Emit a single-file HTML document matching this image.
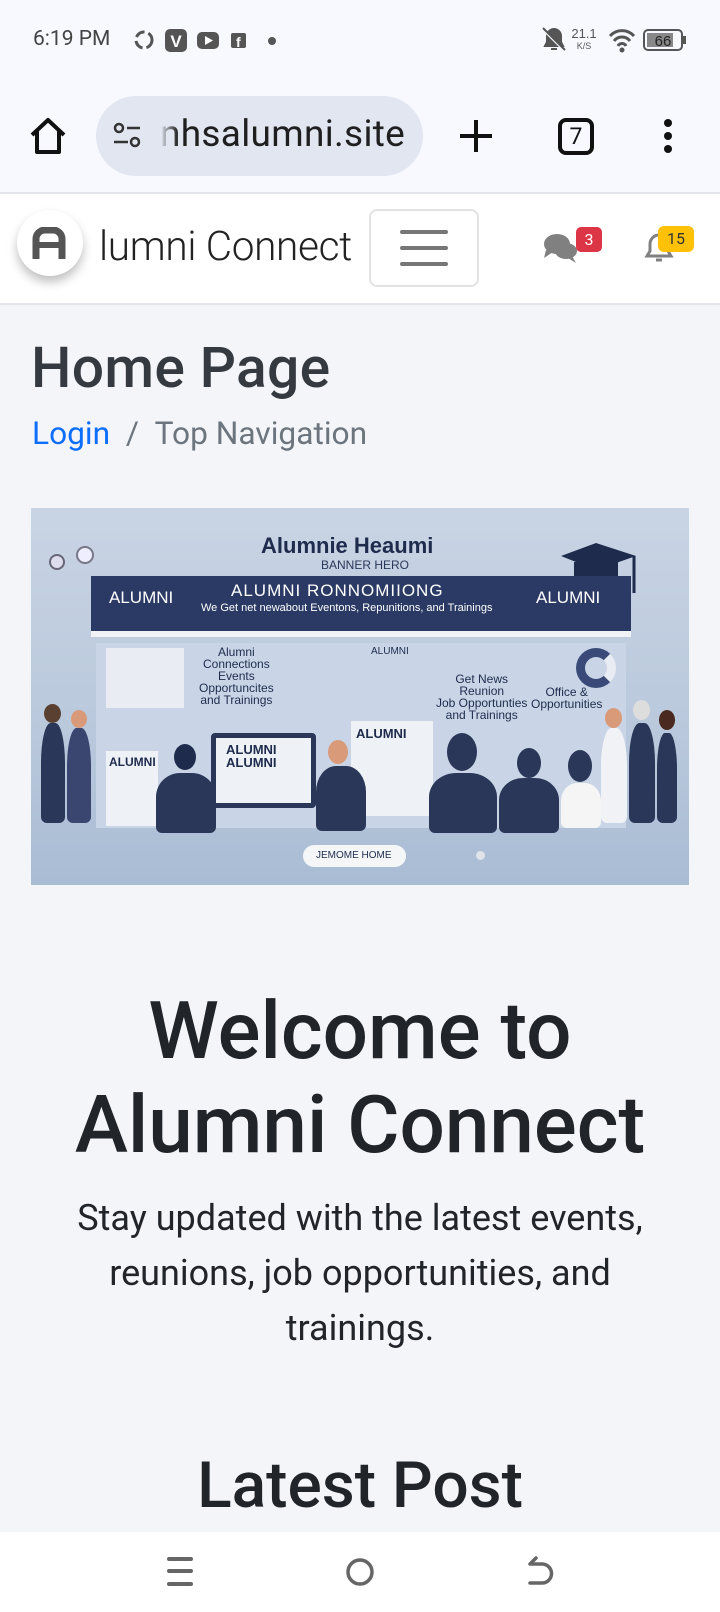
<!DOCTYPE html>
<html><head><meta charset="utf-8"><style>
*{margin:0;padding:0;box-sizing:border-box}
body{width:720px;height:1612px;overflow:hidden;background:#f4f5f9;font-family:"Roboto","Liberation Sans",sans-serif;position:relative}
.abs{position:absolute}
.sb{left:0;top:0;width:720px;height:192px;background:#f8f9fe}
.nav{left:0;top:192px;width:720px;height:113px;background:#fff;border-top:2px solid #e2e4ea;border-bottom:2px solid #e2e4ea}
.ban{left:31px;top:508px;width:658px;height:377px;background:linear-gradient(180deg,#c9d4e4 0%,#b9c8dc 60%,#a9bcd4 100%);overflow:hidden}
.ban .t{position:absolute;font-family:"Liberation Sans",sans-serif;white-space:nowrap}
.fig{position:absolute;background:#2a3758;border-radius:40% 40% 6px 6px}
.head{position:absolute;border-radius:50%}
</style></head><body>
<div class="abs sb"></div>
<div class="abs" style="left:33px;top:27px;font-size:21px;color:#444">6:19 PM</div>
<svg class="abs" style="left:132px;top:28px" width="150" height="26" viewBox="0 0 150 26">
<circle cx="12" cy="12" r="8" fill="none" stroke="#555" stroke-width="3" stroke-dasharray="10 4"/>
<rect x="33" y="1" width="22" height="23" rx="5" fill="#555"/><text x="44" y="19" font-size="17" font-weight="bold" fill="#fff" text-anchor="middle" font-family="Liberation Sans">V</text>
<rect x="65" y="4" width="22" height="17" rx="5" fill="#555"/><path d="M73 8 L81 12.5 L73 17Z" fill="#fff"/>
<rect x="99" y="5" width="15" height="15" rx="2" fill="#555"/><text x="104" y="19" font-size="14" font-weight="bold" fill="#fff" font-family="Liberation Sans">f</text>
<circle cx="140" cy="13" r="4" fill="#555"/></svg>
<svg class="abs" style="left:540px;top:24px" width="150" height="32" viewBox="0 0 150 32">
<path d="M5 22 L7 18 V12 A7 7 0 0 1 21 12 V18 L23 22 Z M11 25 h6" fill="#555" stroke="#555" stroke-width="2"/><path d="M3 5 L25 27" stroke="#f8f9fe" stroke-width="3"/><path d="M3 4 L25 26" stroke="#555" stroke-width="2"/>
<text x="44" y="14" font-size="13" fill="#555" text-anchor="middle" font-family="Liberation Sans">21.1</text><text x="44" y="25" font-size="9" fill="#555" text-anchor="middle" font-family="Liberation Sans">K/S</text>
<path d="M70 12 A16 16 0 0 1 94 12 M74 17 A10 10 0 0 1 90 17 M78 22 A4.5 4.5 0 0 1 86 22" stroke="#555" stroke-width="3" fill="none"/><circle cx="82" cy="26" r="2.5" fill="#555"/>
<rect x="104" y="6" width="38" height="20" rx="4" fill="none" stroke="#555" stroke-width="2"/><rect x="107" y="9" width="26" height="14" fill="#888"/><rect x="143" y="12" width="3" height="8" fill="#555"/>
<text x="123" y="22" font-size="15" fill="#222" text-anchor="middle" font-family="Liberation Sans">66</text></svg>
<svg class="abs" style="left:28px;top:116px" width="40" height="40" viewBox="0 0 40 40"><path d="M4 19 L20 4 L36 19 M9 15 V36 H31 V15" fill="none" stroke="#111" stroke-width="4" stroke-linejoin="round"/></svg>
<div class="abs" style="left:96px;top:96px;width:327px;height:80px;border-radius:40px;background:#e1e6f0"></div>
<svg class="abs" style="left:112px;top:122px" width="32" height="28" viewBox="0 0 32 28"><circle cx="7" cy="6" r="4" fill="none" stroke="#333" stroke-width="2.5"/><path d="M15 6 H28 M2 20 H16" stroke="#333" stroke-width="2.5"/><circle cx="23" cy="20" r="4" fill="none" stroke="#333" stroke-width="2.5"/></svg>
<div class="abs" style="left:160px;top:113px;font-size:37px;color:#1f1f1f;letter-spacing:0.3px">nhsalumni.site</div>
<div class="abs" style="left:160px;top:110px;width:18px;height:50px;background:linear-gradient(90deg,#e1e6f0,rgba(225,230,240,0))"></div>
<svg class="abs" style="left:458px;top:118px" width="36" height="36"><path d="M18 2 V34 M2 18 H34" stroke="#111" stroke-width="4"/></svg>
<div class="abs" style="left:558px;top:118px;width:36px;height:37px;border:4px solid #111;border-radius:8px;font-size:23px;text-align:center;line-height:29px;color:#111">7</div>
<svg class="abs" style="left:662px;top:118px" width="12" height="36"><circle cx="6" cy="5" r="4" fill="#111"/><circle cx="6" cy="18" r="4" fill="#111"/><circle cx="6" cy="31" r="4" fill="#111"/></svg>
<div class="abs nav"></div>
<div class="abs" style="left:17px;top:210px;width:66px;height:66px;border-radius:50%;background:#fff;box-shadow:0 6px 10px rgba(0,0,0,.25)"></div>
<svg class="abs" style="left:32px;top:227px" width="34" height="32" viewBox="0 0 34 32"><path d="M4 32 V12 A9 9 0 0 1 13 3 H21 A9 9 0 0 1 30 12 V32" fill="none" stroke="#555" stroke-width="7"/><path d="M4 18 H30" stroke="#555" stroke-width="6"/></svg>
<div class="abs" style="left:99px;top:222px;font-size:40.5px;color:#222;font-weight:300;letter-spacing:-0.3px">lumni Connect</div>
<div class="abs" style="left:369px;top:209px;width:110px;height:78px;border:2px solid #e3e3e3;border-radius:8px"></div>
<svg class="abs" style="left:399px;top:228px" width="50" height="40"><path d="M3 4 H47 M3 20 H47 M3 36 H47" stroke="#777" stroke-width="4" stroke-linecap="round"/></svg>
<svg class="abs" style="left:542px;top:232px" width="40" height="32" viewBox="0 0 40 32"><ellipse cx="15" cy="12" rx="13" ry="10" fill="#808080"/><path d="M4 18 L2 26 L11 20Z" fill="#808080"/><ellipse cx="24" cy="19" rx="11" ry="8" fill="#808080"/><path d="M30 24 L34 31 L26 26Z" fill="#808080"/></svg>
<div class="abs" style="left:576px;top:227px;width:26px;height:25px;background:#dc3545;border-radius:5px;color:#fff;font-size:16px;text-align:center;line-height:25px">3</div>
<svg class="abs" style="left:642px;top:230px" width="34" height="34" viewBox="0 0 34 34"><path d="M5 26 L8 21 V14 A9 9 0 0 1 26 14 V21 L29 26 Z" fill="none" stroke="#808080" stroke-width="3"/><path d="M14 30 h6" stroke="#808080" stroke-width="3"/></svg>
<div class="abs" style="left:658px;top:226px;width:36px;height:26px;background:#ffc107;border-radius:6px;color:#333;font-size:16px;text-align:center;line-height:26px">15</div>
<div class="abs" style="left:31px;top:334px;font-size:57px;color:#343a40;font-weight:500;letter-spacing:0.3px">Home Page</div>
<div class="abs" style="left:32px;top:415px;font-size:31.7px;color:#6c757d"><span style="color:#0d6efd">Login</span>&nbsp;&nbsp;/&nbsp;&nbsp;Top Navigation</div>
<div class="abs ban">
<div class="t" style="left:230px;top:25px;font-size:22px;font-weight:bold;color:#1e2b4d">Alumnie Heaumi</div>
<div class="t" style="left:290px;top:50px;font-size:12px;color:#2a3758">BANNER HERO</div>
<div style="position:absolute;left:18px;top:46px;width:16px;height:16px;border-radius:50%;border:2px solid #667;background:#dde"></div>
<div style="position:absolute;left:45px;top:38px;width:18px;height:18px;border-radius:50%;border:2px solid #778;background:#eef"></div>
<svg style="position:absolute;left:525px;top:30px" width="90" height="60"><path d="M5 18 L40 5 L80 18 L40 32Z" fill="#1e2b4d"/><path d="M18 24 V40 Q40 52 62 40 V24" fill="#1e2b4d"/><path d="M78 18 V55" stroke="#1e2b4d" stroke-width="3"/></svg>
<div style="position:absolute;left:60px;top:68px;width:540px;height:56px;background:#2b3a64"></div>
<div style="position:absolute;left:60px;top:123px;width:540px;height:6px;background:#f0f2f6"></div>
<div class="t" style="left:78px;top:80px;font-size:17px;color:#fff">ALUMNI</div>
<div class="t" style="left:200px;top:73px;font-size:17px;color:#fff;letter-spacing:1px">ALUMNI RONNOMIIONG</div>
<div class="t" style="left:170px;top:94px;font-size:11px;color:#fff">We Get net newabout Eventons, Repunitions, and Trainings</div>
<div class="t" style="left:505px;top:80px;font-size:17px;color:#fff">ALUMNI</div>
<div style="position:absolute;left:65px;top:135px;width:530px;height:185px;background:#c9d5e6"></div>
<div style="position:absolute;left:75px;top:140px;width:78px;height:60px;background:#e9edf3"></div>
<div class="t" style="left:168px;top:138px;font-size:12px;color:#1e2b4d;text-align:center;line-height:12px">Alumni<br>Connections<br>Events<br>Opportuncites<br>and Trainings</div>
<div class="t" style="left:405px;top:165px;font-size:12px;color:#1e2b4d;text-align:center;line-height:12px">Get News<br>Reunion<br>Job Opportunties<br>and Trainings</div>
<div class="t" style="left:500px;top:178px;font-size:12px;color:#1e2b4d;text-align:center;line-height:12px">Office &amp;<br>Opportunities</div>
<div class="t" style="left:340px;top:138px;font-size:10px;color:#1e2b4d">ALUMNI</div>
<div style="position:absolute;left:545px;top:140px;width:40px;height:40px;border-radius:50%;border:9px solid #3a4a78;border-right-color:#e9edf3"></div>
<div style="position:absolute;left:75px;top:243px;width:52px;height:75px;background:#eef1f6"></div>
<div class="t" style="left:78px;top:247px;font-size:12px;font-weight:bold;color:#1e2b4d">ALUMNI</div>
<div style="position:absolute;left:180px;top:225px;width:105px;height:75px;background:#eef1f6;border:5px solid #2a3758;border-radius:4px"></div>
<div class="t" style="left:195px;top:235px;font-size:13px;font-weight:bold;color:#1e2b4d;line-height:13px">ALUMNI<br>ALUMNI</div>
<div style="position:absolute;left:320px;top:213px;width:82px;height:95px;background:#eef1f6"></div>
<div class="t" style="left:325px;top:218px;font-size:13px;font-weight:bold;color:#1e2b4d">ALUMNI</div>
<div class="fig" style="left:10px;top:215px;width:24px;height:100px"></div><div class="head" style="left:13px;top:196px;width:17px;height:19px;background:#5a4030"></div>
<div class="fig" style="left:36px;top:220px;width:24px;height:95px;background:#3a4670"></div><div class="head" style="left:40px;top:202px;width:16px;height:18px;background:#d99a7a"></div>
<div class="fig" style="left:125px;top:265px;width:60px;height:60px"></div><div class="head" style="left:143px;top:236px;width:22px;height:26px;background:#1e2b4d"></div>
<div class="fig" style="left:285px;top:258px;width:50px;height:65px"></div><div class="head" style="left:297px;top:232px;width:20px;height:24px;background:#d99a7a"></div>
<div class="fig" style="left:398px;top:265px;width:68px;height:60px"></div><div class="head" style="left:416px;top:225px;width:30px;height:38px;background:#2a3758"></div>
<div class="fig" style="left:468px;top:270px;width:60px;height:55px"></div><div class="head" style="left:486px;top:240px;width:24px;height:30px;background:#2a3758"></div>
<div class="fig" style="left:530px;top:275px;width:40px;height:45px;background:#f5f5f5"></div><div class="head" style="left:537px;top:242px;width:24px;height:32px;background:#2a3758"></div>
<div class="fig" style="left:570px;top:220px;width:26px;height:95px;background:#f0f2f6"></div><div class="head" style="left:574px;top:200px;width:17px;height:20px;background:#d99a7a"></div>
<div class="fig" style="left:598px;top:215px;width:26px;height:100px"></div><div class="head" style="left:602px;top:192px;width:17px;height:20px;background:#ddd"></div>
<div class="fig" style="left:626px;top:225px;width:20px;height:90px"></div><div class="head" style="left:628px;top:202px;width:16px;height:20px;background:#4a2a20"></div>
<div style="position:absolute;left:272px;top:337px;width:103px;height:22px;border-radius:11px;background:#f5f6f8"></div>
<div class="t" style="left:285px;top:342px;font-size:10px;color:#1e2b4d">JEMOME HOME</div>
<div style="position:absolute;left:445px;top:343px;width:9px;height:9px;border-radius:50%;background:#e0e4ea"></div>
</div>
<div class="abs" style="left:0;top:984px;width:720px;text-align:center;font-size:80px;font-weight:500;color:#212529;line-height:94px">Welcome to<br>Alumni Connect</div>
<div class="abs" style="left:55px;top:1191px;width:610px;text-align:center;font-size:36px;color:#212529;line-height:55px">Stay updated with the latest events, reunions, job opportunities, and trainings.</div>
<div class="abs" style="left:0;top:1448px;width:720px;text-align:center;font-size:64px;font-weight:500;color:#212529">Latest Post</div>
<div class="abs" style="left:0;top:1532px;width:720px;height:80px;background:#fff"></div>
<svg class="abs" style="left:166px;top:1556px" width="28" height="32"><path d="M3 3 H25 M3 15 H25 M3 28 H25" stroke="#666" stroke-width="4" stroke-linecap="round"/></svg>
<svg class="abs" style="left:345px;top:1556px" width="30" height="32"><ellipse cx="15" cy="16" rx="12" ry="12" fill="none" stroke="#666" stroke-width="3.5"/></svg>
<svg class="abs" style="left:526px;top:1555px" width="30" height="34"><path d="M4 28 H16 A9.5 9.5 0 0 0 16 9 H6 M10 3 L4 9" fill="none" stroke="#666" stroke-width="3.5" stroke-linecap="round"/></svg>
</body></html>
